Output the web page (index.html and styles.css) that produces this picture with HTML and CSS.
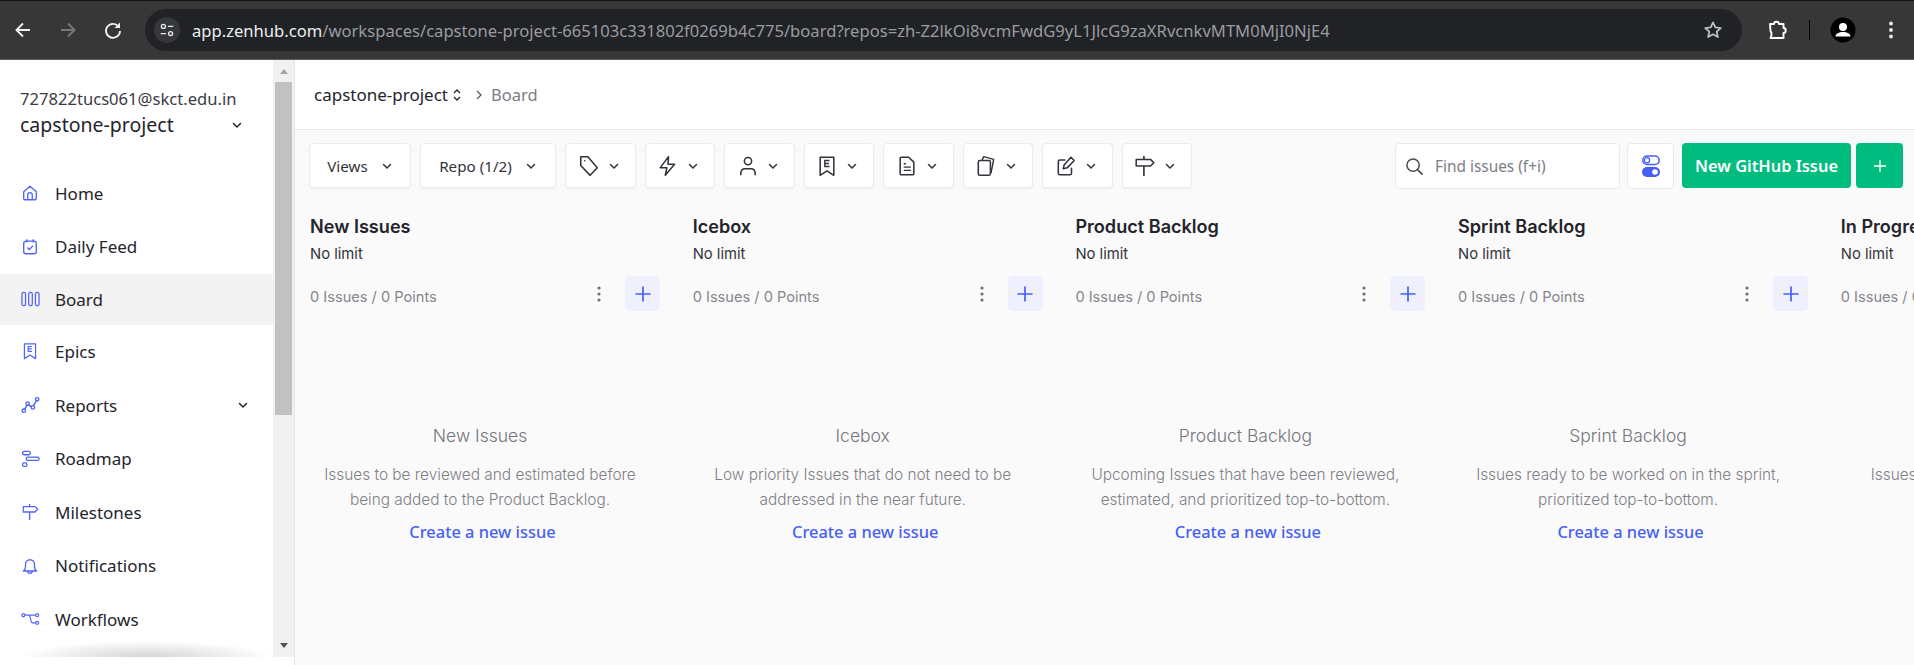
FILE: index.html
```html
<!DOCTYPE html>
<html lang="en">
<head>
<meta charset="utf-8">
<title>Board - Zenhub</title>
<link rel="stylesheet" href="styles.css">
</head>
<body>
<svg class="defs" width="0" height="0" aria-hidden="true">
  <symbol id="chev" viewBox="0 0 12 12"><path d="M2.5 4.5 6 8l3.5-3.5" fill="none" stroke="currentColor" stroke-width="1.5" stroke-linecap="round" stroke-linejoin="round"/></symbol>
  <symbol id="plus" viewBox="0 0 20 20"><path d="M10 2.5v15M2.5 10h15" fill="none" stroke="currentColor" stroke-width="1.7"/></symbol>
  <symbol id="dots" viewBox="0 0 6 18"><circle cx="3" cy="3" r="1.6" fill="currentColor"/><circle cx="3" cy="9" r="1.6" fill="currentColor"/><circle cx="3" cy="15" r="1.6" fill="currentColor"/></symbol>
  <symbol id="i-tag" viewBox="0 0 20 20"><path d="M2.5 1.5H9l8.500 10-6.500 7L2.500 9.500z M6 5.200h.1" fill="none" stroke="currentColor" stroke-width="1.4" stroke-linejoin="round" stroke-linecap="round"/></symbol>
  <symbol id="i-bolt" viewBox="0 0 20 20"><path d="M10.500 1.500 3 11.500h6l-1.500 7 8.500-10h-6l.5-7z" fill="none" stroke="currentColor" stroke-width="1.4" stroke-linejoin="round"/></symbol>
  <symbol id="i-user" viewBox="0 0 20 20"><circle cx="10" cy="5.500" r="3.300" fill="none" stroke="currentColor" stroke-width="1.400"/><path d="M3.500 18v-1.500c0-2.500 1.800-4 4-4h5c2.200 0 4 1.500 4 4V18" fill="none" stroke="currentColor" stroke-width="1.400" stroke-linecap="round"/></symbol>
  <symbol id="i-epic" viewBox="0 0 20 20"><path d="M3.800 2h12.400v16.500L10 14.500l-6.200 4z" fill="none" stroke="currentColor" stroke-width="1.400" stroke-linejoin="round"/><path d="M12.300 5H8v5.500h4.300M8 7.700h3.800" fill="none" stroke="currentColor" stroke-width="1.300"/></symbol>
  <symbol id="i-doc" viewBox="0 0 20 20"><path d="M3.800 3c0-.6.400-1 1-1h6.700l4.700 4.500V17c0 .6-.4 1-1 1H4.800c-.6 0-1-.4-1-1z" fill="none" stroke="currentColor" stroke-width="1.400" stroke-linejoin="round"/><path d="M7 8h2M7 11h6.500M7 14h6.500" fill="none" stroke="currentColor" stroke-width="1.300"/></symbol>
  <symbol id="i-copy" viewBox="0 0 20 20"><rect x="3" y="5" width="11" height="13.500" rx="1.500" fill="none" stroke="currentColor" stroke-width="1.400"/><path d="M6.500 4.500 8 1.500l9 2.500-2.500 12.500" fill="none" stroke="currentColor" stroke-width="1.300" stroke-linejoin="round"/></symbol>
  <symbol id="i-edit" viewBox="0 0 20 20"><path d="M9 4.500H4.500A1.500 1.500 0 0 0 3 6v10.500A1.500 1.500 0 0 0 4.500 18h9a1.500 1.500 0 0 0 1.500-1.500V12" fill="none" stroke="currentColor" stroke-width="1.400" stroke-linecap="round"/><path d="M7.500 12.500 8.300 9 14.500 2l3 3L11 11.700z" fill="none" stroke="currentColor" stroke-width="1.400" stroke-linejoin="round"/></symbol>
  <symbol id="i-sign" viewBox="0 0 20 20"><path d="M9 1v3M9 10v9" fill="none" stroke="currentColor" stroke-width="1.500"/><path d="M2 4h13l3 3-3 3H2z" fill="none" stroke="currentColor" stroke-width="1.400" stroke-linejoin="round"/></symbol>
</svg>

<header class="browser">
  <div class="browser-nav">
    <svg class="bi" viewBox="0 0 20 20"><path d="M17 10H3.500M10 3.500 3.500 10l6.500 6.500" fill="none" stroke="#f1f1f1" stroke-width="1.900"/></svg>
    <svg class="bi" viewBox="0 0 20 20"><path d="M3 10h13.500M10 3.500l6.500 6.500-6.500 6.500" fill="none" stroke="#77797c" stroke-width="1.900"/></svg>
    <svg class="bi" viewBox="0 0 20 20"><path d="M15.500 6.500A7 7 0 1 0 17 11" fill="none" stroke="#f1f1f1" stroke-width="1.900"/><path d="M17 2.500V8h-5.500z" fill="#f1f1f1"/></svg>
  </div>
  <div class="omnibox">
    <span class="tune"><svg viewBox="0 0 20 20" width="18" height="18"><circle cx="6" cy="6" r="2.200" fill="none" stroke="#e8eaed" stroke-width="1.500"/><path d="M11 6h6M3 14h6" stroke="#e8eaed" stroke-width="1.600"/><circle cx="14" cy="14" r="2.200" fill="none" stroke="#e8eaed" stroke-width="1.500"/></svg></span>
    <span class="url"><b>app.zenhub.com</b>/workspaces/capstone-project-665103c331802f0269b4c775/board?repos=zh-Z2lkOi8vcmFwdG9yL1JlcG9zaXRvcnkvMTM0MjI0NjE4</span>
    <svg class="star" viewBox="0 0 20 20"><path d="m10 2.300 2.300 5.100 5.500.600-4.100 3.700 1.200 5.400L10 14.300l-4.900 2.800 1.200-5.400L2.200 8l5.500-.6z" fill="none" stroke="#bfc1c4" stroke-width="1.700" stroke-linejoin="round"/></svg>
  </div>
  <div class="browser-actions">
    <svg class="ext" viewBox="0 0 22 22"><path d="M4 5h4c0-3 5-3 5 0h4.500v4c3 0 3 5 0 5v5H4.500c1.500-3 1.500-5 0-7z" fill="none" stroke="#fff" stroke-width="1.900" stroke-linejoin="round"/></svg>
    <span class="bar"></span>
    <svg class="avatar" viewBox="0 0 26 26"><circle cx="13" cy="13" r="12.500" fill="#000"/><circle cx="13" cy="10" r="4" fill="#fff"/><path d="M5.500 19.500c0-3 3.500-4.500 7.500-4.500s7.500 1.500 7.500 4.500z" fill="#fff"/></svg>
    <svg class="kebab" viewBox="0 0 6 20"><circle cx="3" cy="3.500" r="1.900" fill="#e8eaed"/><circle cx="3" cy="10" r="1.900" fill="#e8eaed"/><circle cx="3" cy="16.500" r="1.900" fill="#e8eaed"/></svg>
  </div>
</header>

<div class="app">
  <aside class="sidebar">
    <div class="account">
      <div class="email">727822tucs061@skct.edu.in</div>
      <div class="workspace"><span>capstone-project</span><svg class="chev"><use href="#chev"/></svg></div>
    </div>
    <nav class="nav">
      <a class="nav-item"><svg class="nav-icon" viewBox="0 0 20 20"><path d="M3 8.500 10 2.500l7 6V16a1.500 1.500 0 0 1-1.500 1.500h-11A1.500 1.500 0 0 1 3 16z M7.500 17.500V12a2.500 2.500 0 0 1 5 0v5.500" fill="none" stroke="currentColor" stroke-width="1.500" stroke-linejoin="round"/></svg>Home</a>
      <a class="nav-item"><svg class="nav-icon" viewBox="0 0 20 20"><rect x="3" y="3.500" width="14" height="14" rx="2.500" fill="none" stroke="currentColor" stroke-width="1.500"/><path d="M6.500 1.500V5M13.500 1.500V5M7 10.500l2.300 2.300 4-4.300" fill="none" stroke="currentColor" stroke-width="1.500"/></svg>Daily Feed</a>
      <a class="nav-item is-active"><svg class="nav-icon wide" viewBox="0 0 20 16"><rect x="1" y="1" width="3.800" height="14" rx="1.700" fill="none" stroke="currentColor" stroke-width="1.300"/><rect x="8.100" y="1" width="3.800" height="14" rx="1.700" fill="none" stroke="currentColor" stroke-width="1.300"/><rect x="15.200" y="1" width="3.800" height="14" rx="1.700" fill="none" stroke="currentColor" stroke-width="1.300"/></svg>Board</a>
      <a class="nav-item"><svg class="nav-icon"><use href="#i-epic"/></svg>Epics</a>
      <a class="nav-item"><svg class="nav-icon wide" viewBox="0 0 20 18"><path d="M3.500 14 7 8l5 3.500L16.500 4" fill="none" stroke="currentColor" stroke-width="1.500"/><circle cx="3" cy="15" r="1.800" fill="#fff" stroke="currentColor" stroke-width="1.400"/><circle cx="7" cy="7.500" r="1.800" fill="#fff" stroke="currentColor" stroke-width="1.400"/><circle cx="12.500" cy="11.500" r="1.800" fill="#fff" stroke="currentColor" stroke-width="1.400"/><circle cx="17" cy="3" r="1.800" fill="#fff" stroke="currentColor" stroke-width="1.400"/></svg><span class="grow">Reports</span><svg class="chev"><use href="#chev"/></svg></a>
      <a class="nav-item"><svg class="nav-icon wide" viewBox="0 0 20 18"><rect x="1.700" y="1" width="8" height="3.500" rx="1.500" fill="none" stroke="currentColor" stroke-width="1.400"/><rect x="5.500" y="7" width="13.500" height="3.500" rx="1.500" fill="none" stroke="currentColor" stroke-width="1.400"/><rect x="1.700" y="13" width="4.500" height="3.800" rx="1.500" fill="none" stroke="currentColor" stroke-width="1.400"/></svg>Roadmap</a>
      <a class="nav-item"><svg class="nav-icon wide"><use href="#i-sign"/></svg>Milestones</a>
      <a class="nav-item"><svg class="nav-icon" viewBox="0 0 20 20"><path d="M2.500 15.500c1.500-1 2.500-2 2.500-4V8a5 5 0 0 1 10 0v3.500c0 2 1 3 2.500 4z M7.500 15.500c0 3.500 5 3.500 5 0" fill="none" stroke="currentColor" stroke-width="1.500" stroke-linejoin="round"/></svg>Notifications</a>
      <a class="nav-item"><svg class="nav-icon wide" viewBox="0 0 20 14"><circle cx="2.500" cy="3" r="1.600" fill="none" stroke="currentColor" stroke-width="1.300"/><circle cx="17" cy="3" r="1.600" fill="none" stroke="currentColor" stroke-width="1.300"/><circle cx="17" cy="11" r="1.600" fill="none" stroke="currentColor" stroke-width="1.300"/><path d="M4 3h11.500M8.500 3c1.500 0 1.500 8 3.500 8h3.500" fill="none" stroke="currentColor" stroke-width="1.300"/></svg>Workflows</a>
    </nav>
    <div class="side-fade"></div>
  </aside>
  <div class="scrollbar">
    <span class="arrow up"></span>
    <span class="thumb"></span>
    <span class="arrow down"></span>
  </div>
  <main class="main">
    <div class="crumbs">
      <span class="crumb-project">capstone-project</span>
      <svg class="updown" viewBox="0 0 10 14"><path d="M2 5l3-3 3 3M2 9l3 3 3-3" fill="none" stroke="currentColor" stroke-width="1.300"/></svg>
      <svg class="crumb-sep" viewBox="0 0 10 12"><path d="M3 2l4 4-4 4" fill="none" stroke="currentColor" stroke-width="1.200"/></svg>
      <span class="crumb-page">Board</span>
    </div>
    <div class="toolbar">
      <button class="tool text-tool views">Views<svg class="chev"><use href="#chev"/></svg></button>
      <button class="tool text-tool repo">Repo (1/2)<svg class="chev"><use href="#chev"/></svg></button>
      <button class="tool"><svg class="tool-icon"><use href="#i-tag"/></svg><svg class="chev"><use href="#chev"/></svg></button>
      <button class="tool"><svg class="tool-icon"><use href="#i-bolt"/></svg><svg class="chev"><use href="#chev"/></svg></button>
      <button class="tool"><svg class="tool-icon"><use href="#i-user"/></svg><svg class="chev"><use href="#chev"/></svg></button>
      <button class="tool"><svg class="tool-icon"><use href="#i-epic"/></svg><svg class="chev"><use href="#chev"/></svg></button>
      <button class="tool"><svg class="tool-icon"><use href="#i-doc"/></svg><svg class="chev"><use href="#chev"/></svg></button>
      <button class="tool"><svg class="tool-icon"><use href="#i-copy"/></svg><svg class="chev"><use href="#chev"/></svg></button>
      <button class="tool"><svg class="tool-icon"><use href="#i-edit"/></svg><svg class="chev"><use href="#chev"/></svg></button>
      <button class="tool"><svg class="tool-icon"><use href="#i-sign"/></svg><svg class="chev"><use href="#chev"/></svg></button>
      <div class="toolbar-right">
        <label class="search"><svg class="search-icon" viewBox="0 0 20 20"><circle cx="8.500" cy="8.500" r="6.500" fill="none" stroke="currentColor" stroke-width="1.600"/><path d="m13.500 13.500 5 5" stroke="currentColor" stroke-width="1.800"/></svg><span>Find issues (f+i)</span></label>
        <button class="toggle"><svg viewBox="0 0 18 22" width="18" height="22"><rect x=".8" y="1" width="16.400" height="8.500" rx="4.200" fill="none" stroke="#4660f5" stroke-width="1.500"/><circle cx="5" cy="5.200" r="2.600" fill="none" stroke="#4660f5" stroke-width="1.300"/><rect y="12" width="18" height="10" rx="5" fill="#4660f5"/><circle cx="13" cy="17" r="2.800" fill="#fff"/></svg></button>
        <button class="green new-issue">New GitHub Issue</button>
        <button class="green green-plus"><svg width="16" height="16"><use href="#plus"/></svg></button>
      </div>
    </div>
    <div class="board">
      <section class="col">
        <h2>New Issues</h2><p class="limit">No limit</p>
        <div class="stats"><span class="grow">0 Issues / 0 Points</span><svg class="dots"><use href="#dots"/></svg><span class="add"><svg width="20" height="20"><use href="#plus"/></svg></span></div>
        <div class="empty"><h3>New Issues</h3><p>Issues to be reviewed and estimated before being added to the Product Backlog.</p><a>Create a new issue</a></div>
      </section>
      <section class="col">
        <h2>Icebox</h2><p class="limit">No limit</p>
        <div class="stats"><span class="grow">0 Issues / 0 Points</span><svg class="dots"><use href="#dots"/></svg><span class="add"><svg width="20" height="20"><use href="#plus"/></svg></span></div>
        <div class="empty"><h3>Icebox</h3><p>Low priority Issues that do not need to be addressed in the near future.</p><a>Create a new issue</a></div>
      </section>
      <section class="col">
        <h2>Product Backlog</h2><p class="limit">No limit</p>
        <div class="stats"><span class="grow">0 Issues / 0 Points</span><svg class="dots"><use href="#dots"/></svg><span class="add"><svg width="20" height="20"><use href="#plus"/></svg></span></div>
        <div class="empty"><h3>Product Backlog</h3><p>Upcoming Issues that have been reviewed, estimated, and prioritized top-to-bottom.</p><a>Create a new issue</a></div>
      </section>
      <section class="col">
        <h2>Sprint Backlog</h2><p class="limit">No limit</p>
        <div class="stats"><span class="grow">0 Issues / 0 Points</span><svg class="dots"><use href="#dots"/></svg><span class="add"><svg width="20" height="20"><use href="#plus"/></svg></span></div>
        <div class="empty"><h3>Sprint Backlog</h3><p>Issues ready to be worked on in the sprint, prioritized top-to-bottom.</p><a>Create a new issue</a></div>
      </section>
      <section class="col">
        <h2>In Progress</h2><p class="limit">No limit</p>
        <div class="stats"><span class="grow">0 Issues / 0 Points</span><svg class="dots"><use href="#dots"/></svg><span class="add"><svg width="20" height="20"><use href="#plus"/></svg></span></div>
        <div class="empty"><h3>In Progress</h3><p>Issues the team is currently working on throughout the sprint.</p><a>Create a new issue</a></div>
      </section>
    </div>
  </main>
</div>
</body>
</html>
```

FILE: styles.css
```css
* { box-sizing: border-box; }
html, body { margin: 0; height: 100%; overflow: hidden; }
body { display: flex; flex-direction: column; background: #fff; font-family: Inter, "Noto Sans", sans-serif; color: #24242c; }
.defs { position: absolute; }
h2, h3, p { margin: 0; }
button { font: inherit; color: inherit; cursor: pointer; }

/* Browser chrome */
.browser { flex: 0 0 60px; display: flex; align-items: center; background: #373737; border-top: 1px solid #111; border-bottom: 1px solid #5a5a5a; padding-left: 13px; font-family: "Noto Sans", sans-serif; }
.browser-nav { display: flex; gap: 25px; width: 132px; }
.bi { width: 20px; height: 20px; }
.omnibox { width: 1597px; height: 42px; border-radius: 21px; background: #202226; display: flex; align-items: center; padding-left: 9px; padding-right: 19px; }
.tune { width: 26px; height: 26px; border-radius: 13px; background: #36373a; display: flex; align-items: center; justify-content: center; margin-right: 12px; flex: none; }
.url { flex: 1; font-size: 16.6px; color: #9a9ca0; white-space: nowrap; overflow: hidden; }
.url b { font-weight: 400; color: #eceef0; }
.star { width: 20px; height: 20px; flex: none; }
.browser-actions { display: flex; align-items: center; margin-left: 24px; }
.ext { width: 22px; height: 22px; }
.bar { width: 1px; height: 20px; background: #000; margin: 0 20px 0 21px; }
.avatar { width: 26px; height: 26px; }
.kebab { width: 6px; height: 20px; margin-left: 32px; }

/* Layout */
.app { flex: 1; display: flex; min-height: 0; }
.sidebar { width: 273px; flex: none; background: #fff; position: relative; height: 597px; overflow: hidden; }
.account { padding: 29px 20px 0; }
.email { font-family: "Noto Sans", sans-serif; font-size: 16.6px; line-height: 20px; color: #3b3b44; white-space: nowrap; }
.workspace { display: flex; align-items: center; justify-content: space-between; font-family: "Noto Sans", sans-serif; font-size: 19.5px; line-height: 28px; margin-top: 2px; padding-right: 10px; color: #24242c; }
.chev { width: 12px; height: 12px; flex: none; }
.nav { margin-top: 27.5px; }
.nav-item { display: flex; align-items: center; height: 53.6px; padding: 0 24px 0 21px; font-family: "Noto Sans", sans-serif; font-size: 17px; color: #24242c; }
.nav-item.is-active { background: #f3f3f3; height: 51px; }
.nav-icon { width: 18px; height: 18px; color: #4f66f7; margin-right: 16px; flex: none; }
.nav-icon.wide { width: 19px; margin-left: -.5px; margin-right: 15.5px; }
.grow { flex: 1; }
.side-fade { position: absolute; left: 20px; right: 0; bottom: 0; height: 16px; background: radial-gradient(ellipse 50% 100% at 50% 100%, #d4d4d4, rgba(255,255,255,0)); }
.scrollbar { width: 21px; height: 597px; flex: none; background: #f1f1f1; display: flex; flex-direction: column; align-items: center; }
.thumb { width: 17px; height: 333px; background: #c1c1c1; margin: 8px 0 auto; }
.arrow { width: 0; height: 0; border-left: 4.5px solid transparent; border-right: 4.5px solid transparent; }
.arrow.up { border-bottom: 5px solid #a3a3a3; margin-top: 9px; }
.arrow.down { border-top: 5px solid #505050; margin: 0 0 9px; }

.main { flex: 1; min-width: 0; background: #fafafa; border-left: 1px solid #e5e5e5; overflow: hidden; }
.crumbs { height: 70px; background: #fff; border-bottom: 1px solid #e8e8e8; display: flex; align-items: center; padding-left: 19px; font-family: "Noto Sans", sans-serif; font-size: 17px; }
.crumb-project { color: #24242c; }
.updown { width: 10px; height: 14px; margin-left: 4px; }
.crumb-sep { width: 10px; height: 12px; margin: 0 7px 0 12px; color: #555; }
.crumb-page { color: #7c7c84; font-size: 16.5px; }

.toolbar { display: flex; gap: 9px; padding: 13px 11px 0 14px; align-items: flex-start; }
.tool { height: 45px; width: 70.5px; background: #fff; border: 1px solid #ececec; border-radius: 4px; box-shadow: 0 1px 2px rgba(0,0,0,.05); display: flex; align-items: center; justify-content: center; gap: 8px; padding: 0 3px 0 0; flex: none; }
.tool .chev { width: 12px; height: 12px; color: #33333b; }
.tool-icon { width: 22px; height: 22px; color: #33333b; }
.text-tool { font-size: 15.2px; color: #33333b; gap: 13px; padding: 0; font-family: "Noto Sans", sans-serif; }
.views { width: 102px; }
.repo { width: 136px; }
.toolbar-right { margin-left: auto; display: flex; gap: 8px; align-items: flex-start; }
.search { width: 225px; height: 46px; margin-right: -1px; background: #fff; border: 1px solid #e9e9e9; border-radius: 4px; display: flex; align-items: center; padding-left: 9px; font-family: "Noto Sans", sans-serif; font-size: 15.4px; color: #7d7d85; }
.search-icon { width: 19px; height: 19px; margin-right: 11px; color: #4c4c54; }
.toggle { width: 47px; height: 46px; background: #fff; border: 1px solid #e9e9e9; border-radius: 4px; padding: 0; display: flex; align-items: center; justify-content: center; }
.green { height: 45px; background: #00bd7f; color: #fff; border: 0; border-radius: 4px; display: flex; align-items: center; justify-content: center; padding: 0; }
.new-issue { width: 169px; font-family: "Noto Sans", sans-serif; font-size: 16.4px; font-weight: 600; }
.green-plus { width: 47px; margin-left: -3px; }

.board { display: flex; gap: 32.7px; padding: 24.5px 0 0 15px; }
.col { width: 350px; flex: none; }
.col h2 { font-size: 18.1px; line-height: 24px; font-weight: 600; color: #24242c; white-space: nowrap; }
.limit { font-size: 14.8px; line-height: 20px; margin-top: 6.5px; color: #33333b; }
.stats { display: flex; align-items: center; height: 35px; margin-top: 12px; font-size: 14.6px; color: #85858d; }
.stats .grow { padding-top: 6px; }
.dots { width: 6px; height: 18px; color: #6f6f77; margin-right: 23px; }
.add { width: 35px; height: 35px; border-radius: 5px; background: #eef0fe; color: #4660f5; display: flex; align-items: center; justify-content: center; }
.empty { text-align: center; margin: 112.5px 10px 0 0; }
.empty h3 { font-size: 17.5px; line-height: 24px; font-weight: 300; color: #75757d; }
.empty p { font-size: 15.4px; line-height: 25px; color: #7f7f87; margin: 14px 10px 0; font-weight: 300; }
.empty a { display: block; margin: 8.5px 0 0 5px; font-family: "Noto Sans", sans-serif; font-size: 16.4px; font-weight: 500; line-height: 24px; color: #4660f5; }
```
